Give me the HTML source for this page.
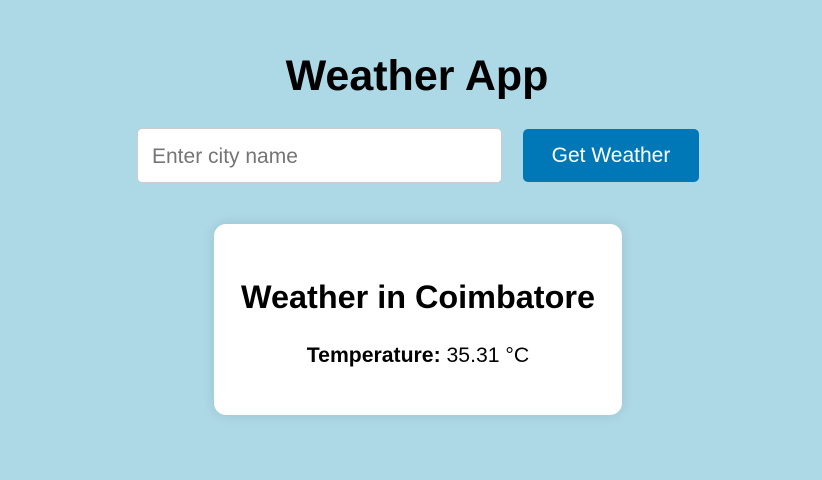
<!DOCTYPE html>
<html><head><style>
body{margin:0;width:822px;height:480px;background:#add8e6;font-family:"Liberation Sans",Arial,sans-serif;position:relative;overflow:hidden}
h1{position:absolute;left:6px;width:822px;top:51px;margin:0;text-align:center;font-size:43px;line-height:50px;font-weight:bold;color:#000}
.inp{position:absolute;left:137px;top:128px;width:363px;height:53px;background:#fff;border:1px solid #ccc;border-radius:5px;box-sizing:content-box}
.inp span{position:absolute;left:14px;top:16px;font-size:21px;color:#757575;line-height:24px}
.btn{position:absolute;left:523px;top:129px;width:176px;height:53px;background:#0077b6;border-radius:5px;color:#fff;font-size:21px;line-height:54px;text-align:center}
.card{position:absolute;left:214px;top:224px;width:408px;height:191px;background:#fff;border-radius:12px;box-shadow:0 0 12px rgba(0,0,0,0.1);text-align:center}
.t{position:absolute;left:0;width:408px;top:53px;font-size:32.4px;font-weight:bold;line-height:40px}
.p{position:absolute;left:0;width:408px;top:120px;font-size:21.2px;line-height:24px}
</style></head><body>
<h1>Weather App</h1>
<div class="inp"><span>Enter city name</span></div>
<div class="btn">Get Weather</div>
<div class="card"><div class="t">Weather in Coimbatore</div><div class="p"><b>Temperature:</b> 35.31 °C</div></div>
</body></html>
